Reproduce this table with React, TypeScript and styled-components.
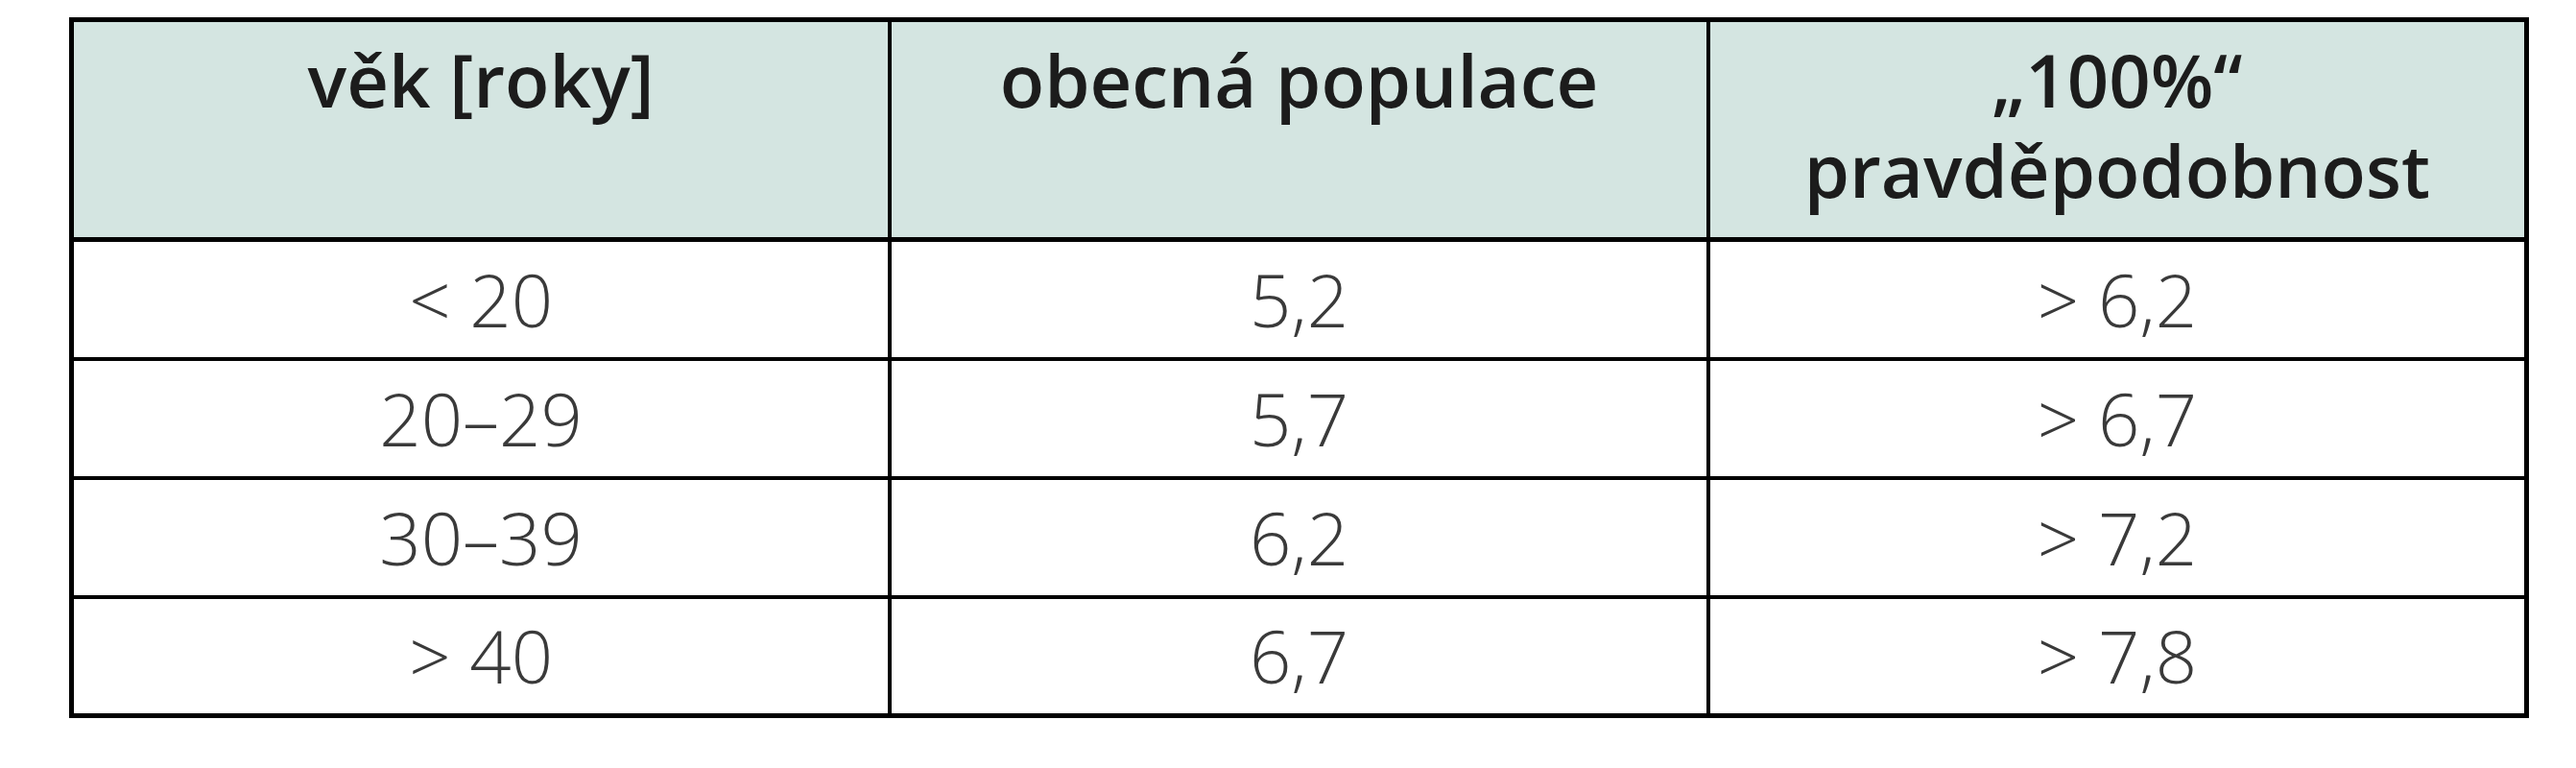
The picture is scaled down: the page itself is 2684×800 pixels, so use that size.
import { createGlobalStyle, styled } from 'styled-components';

const GlobalStyle = createGlobalStyle`
  html, body {
    margin: 0;
    padding: 0;
    background: #ffffff;
  }
  body {
    font-family: 'Open Sans', 'Noto Sans', 'DejaVu Sans', sans-serif;
  }
`;

const Page = styled.main`
  width: 2684px;
  height: 800px;
  padding: 18px 0 0 72px;
  box-sizing: border-box;
`;

const Table = styled.table`
  width: 2563px;
  border-collapse: collapse;
  table-layout: fixed;
  border: 5px solid #000;
`;

const HeadCell = styled.th`
  height: 229px;
  padding: 13px 10px 0;
  box-sizing: border-box;
  vertical-align: top;
  background: #d4e5e1;
  border: 4px solid #000;
  border-bottom-width: 5px;
  font-size: 76px;
  font-weight: 600;
  font-stretch: 96%;
  line-height: 94px;
  color: #1c1c1c;
  text-align: center;
`;

const Cell = styled.td`
  height: 124px;
  padding: 0 10px;
  box-sizing: border-box;
  vertical-align: middle;
  border: 4px solid #000;
  font-size: 76px;
  font-weight: 300;
  font-stretch: 96%;
  line-height: 1;
  color: #3a3a3a;
  text-align: center;
`;

const rows = [
  ['< 20', '5,2', '> 6,2'],
  ['20–29', '5,7', '> 6,7'],
  ['30–39', '6,2', '> 7,2'],
  ['> 40', '6,7', '> 7,8'],
];

const App = () => (
  <>
    <GlobalStyle />
    <Page>
      <Table>
        <thead>
          <tr>
            <HeadCell>věk [roky]</HeadCell>
            <HeadCell>obecná populace</HeadCell>
            <HeadCell>
              „100%“
              <br />
              pravděpodobnost
            </HeadCell>
          </tr>
        </thead>
        <tbody>
          {rows.map((row) => (
            <tr key={row[0]}>
              {row.map((value, i) => (
                <Cell key={i}>{value}</Cell>
              ))}
            </tr>
          ))}
        </tbody>
      </Table>
    </Page>
  </>
);

export default App;
